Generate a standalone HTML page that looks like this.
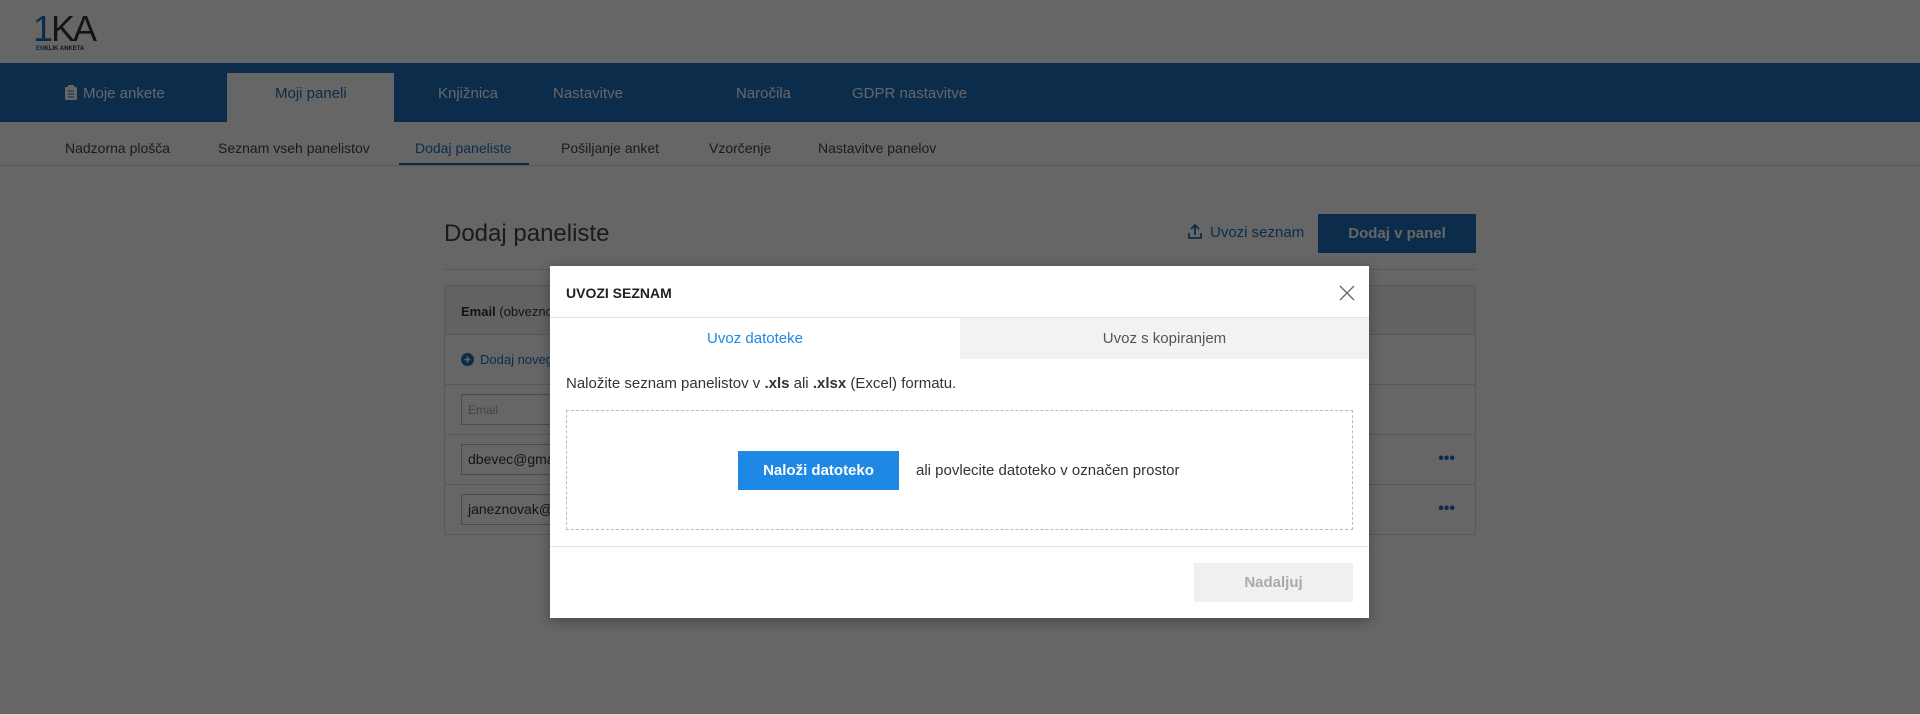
<!DOCTYPE html>
<html><head><meta charset="utf-8"><style>
*{margin:0;padding:0;box-sizing:border-box}
body{width:1920px;height:714px;position:relative;overflow:hidden;background:#fff;font-family:"Liberation Sans",sans-serif;color:#333}
.abs{position:absolute}
.top{left:0;top:0;width:1920px;height:63px;background:#fff}
.nav{left:0;top:63px;width:1920px;height:59px;background:#1e6fbf}
.nav span{position:absolute;top:22px;font-size:15px;color:#fff}
.act{left:227px;top:73px;width:167px;height:49px;background:#fff}
.sub span{position:absolute;top:140px;font-size:14px;color:#444}
.ov{left:0;top:0;width:1920px;height:714px;background:rgba(0,0,0,.6)}
.modal{left:550px;top:266px;width:819px;height:352px;background:#fff;box-shadow:0 3px 12px rgba(0,0,0,.3)}
</style></head><body>
<div class="abs top"></div>
<div class="abs" style="left:33px;top:11px;font-size:36px;letter-spacing:-2px;color:#333;line-height:36px"><span style="color:#1e6fbf">1</span>KA</div>
<div class="abs" style="left:36px;top:46px;font-size:6px;font-weight:bold;color:#333"><span style="color:#1e6fbf">EN</span>KLIK ANKETA</div>
<div class="abs nav">
<span style="left:65px"><svg width="12" height="15" viewBox="0 0 12 15" style="vertical-align:-2px;margin-right:6px"><rect x="0" y="2" width="12" height="13" rx="1" fill="#fff"/><rect x="3" y="0" width="6" height="3" fill="#fff"/><path d="M3 6h6M3 9h6M3 12h6" stroke="#1e6fbf" stroke-width="1"/></svg>Moje ankete</span>
<span style="left:438px">Knjižnica</span>
<span style="left:553px">Nastavitve</span>
<span style="left:736px">Naročila</span>
<span style="left:852px">GDPR nastavitve</span>
</div>
<div class="abs act"></div>
<div class="abs" style="left:275px;top:85px;font-size:15px;color:#1e6fbf">Moji paneli</div>
<div class="sub">
<span style="left:65px">Nadzorna plošča</span>
<span style="left:218px">Seznam vseh panelistov</span>
<span style="left:415px;color:#1e6fbf">Dodaj paneliste</span>
<span style="left:561px">Pošiljanje anket</span>
<span style="left:709px">Vzorčenje</span>
<span style="left:818px">Nastavitve panelov</span>
</div>
<div class="abs" style="left:399px;top:163px;width:130px;height:2px;background:#1e6fbf"></div>
<div class="abs" style="left:0;top:165px;width:1920px;height:1px;background:#ddd"></div>
<div class="abs" style="left:444px;top:220px;font-size:24px;color:#444">Dodaj paneliste</div>
<div class="abs" style="left:1188px;top:224px;font-size:15px;color:#1e6fbf"><svg width="14" height="15" viewBox="0 0 14 15" style="vertical-align:-2px;margin-right:8px"><path d="M7 11V1M3 5l4-4 4 4M1 9v5h12V9" stroke="#1e6fbf" stroke-width="1.8" fill="none"/></svg>Uvozi seznam</div>
<div class="abs" style="left:1318px;top:214px;width:158px;height:39px;background:#1e6fbf;color:#fff;font-size:15px;font-weight:bold;text-align:center;line-height:39px">Dodaj v panel</div>
<div class="abs" style="left:444px;top:269px;width:1032px;height:1px;background:#ddd"></div>
<div class="abs" style="left:444px;top:285px;width:1032px;height:250px;border:1px solid #ddd">
<div style="height:49px;background:#f5f5f5;border-bottom:1px solid #ddd;font-size:13px;padding:18px 16px"><b>Email</b> (obvezno)</div>
<div style="height:50px;border-bottom:1px solid #ddd;font-size:13px;padding:17px 16px;color:#1e6fbf"><svg width="13" height="13" viewBox="0 0 13 13" style="vertical-align:-2px;margin-right:6px"><circle cx="6.5" cy="6.5" r="6.5" fill="#1e6fbf"/><path d="M6.5 3.5v6M3.5 6.5h6" stroke="#fff" stroke-width="1.6"/></svg>Dodaj novega</div>
<div style="height:50px;border-bottom:1px solid #ddd;padding:9px 16px"><div style="width:120px;height:31px;border:1px solid #bbb;font-size:12px;color:#aaa;padding:8px 6px">Email</div></div>
<div style="height:50px;border-bottom:1px solid #ddd;padding:9px 16px;position:relative"><div style="width:120px;height:31px;border:1px solid #bbb;font-size:14px;padding:6px 6px">dbevec@gmail</div><span style="position:absolute;right:20px;top:15px;color:#1e6fbf;font-weight:bold">•••</span></div>
<div style="height:49px;padding:9px 16px;position:relative"><div style="width:120px;height:31px;border:1px solid #bbb;font-size:14px;padding:6px 6px">janeznovak@g</div><span style="position:absolute;right:20px;top:15px;color:#1e6fbf;font-weight:bold">•••</span></div>
</div>
<div class="abs ov"></div>
<div class="abs modal">
<div style="position:absolute;left:16px;top:19px;font-size:14px;font-weight:bold;color:#222">UVOZI SEZNAM</div>
<svg style="position:absolute;left:789px;top:19px" width="16" height="16" viewBox="0 0 16 16"><path d="M1 1l14 14M15 1L1 15" stroke="#666" stroke-width="1.3"/></svg>
<div style="position:absolute;left:0;top:51px;width:819px;height:1px;background:#e3e3e3"></div>
<div style="position:absolute;left:410px;top:52px;width:409px;height:41px;background:#f2f2f2"></div>
<div style="position:absolute;left:0;top:64px;width:410px;text-align:center;font-size:15px;color:#1e88e5">Uvoz datoteke</div>
<div style="position:absolute;left:410px;top:64px;width:409px;text-align:center;font-size:15px;color:#555">Uvoz s kopiranjem</div>
<div style="position:absolute;left:16px;top:109px;font-size:15px;color:#333">Naložite seznam panelistov v <b>.xls</b> ali <b>.xlsx</b> (Excel) formatu.</div>
<div style="position:absolute;left:16px;top:144px;width:787px;height:120px;border:1px dashed #bbb"></div>
<div style="position:absolute;left:188px;top:185px;width:161px;height:39px;background:#1e88e5;color:#fff;font-size:15px;font-weight:bold;text-align:center;line-height:39px">Naloži datoteko</div>
<div style="position:absolute;left:366px;top:196px;font-size:15px;color:#333">ali povlecite datoteko v označen prostor</div>
<div style="position:absolute;left:0;top:280px;width:819px;height:1px;background:#e3e3e3"></div>
<div style="position:absolute;left:644px;top:297px;width:159px;height:39px;background:#f0f0f0;color:#aaa;font-size:15px;font-weight:bold;text-align:center;line-height:39px">Nadaljuj</div>
</div>
</body></html>
